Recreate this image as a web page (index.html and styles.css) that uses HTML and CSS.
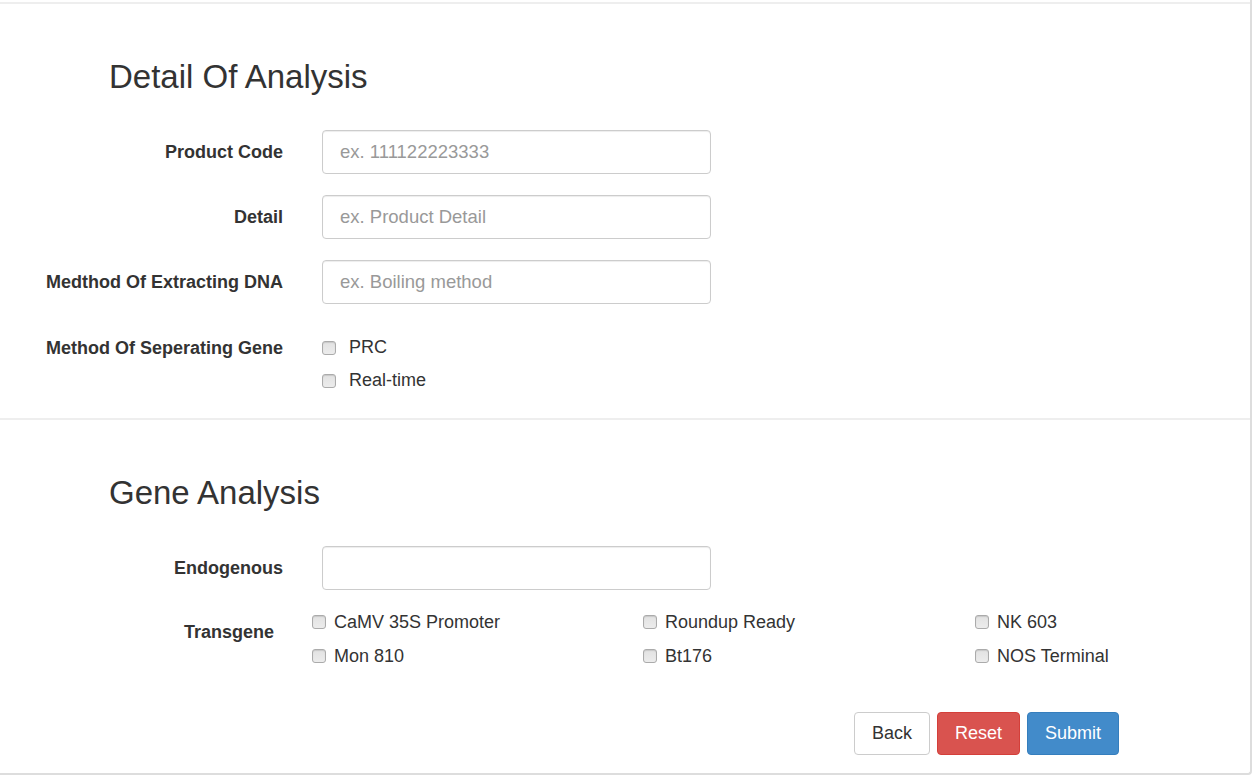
FILE: index.html
```html
<!DOCTYPE html>
<html>
<head>
<meta charset="utf-8">
<link rel="stylesheet" href="styles.css">
</head>
<body>
<div class="panel">
  <section class="section">
    <h2 class="section-title">Detail Of Analysis</h2>
    <div class="form-row">
      <label class="form-label">Product Code</label>
      <div class="form-field"><input class="form-input" type="text" placeholder="ex. 111122223333"></div>
    </div>
    <div class="form-row">
      <label class="form-label">Detail</label>
      <div class="form-field"><input class="form-input" type="text" placeholder="ex. Product Detail"></div>
    </div>
    <div class="form-row">
      <label class="form-label">Medthod Of Extracting DNA</label>
      <div class="form-field"><input class="form-input" type="text" placeholder="ex. Boiling method"></div>
    </div>
    <div class="form-row form-row-checks">
      <label class="form-label form-label-line">Method Of Seperating Gene</label>
      <div class="form-field check-list">
        <label class="check"><input class="check-box" type="checkbox"><span>PRC</span></label>
        <label class="check"><input class="check-box" type="checkbox"><span>Real-time</span></label>
      </div>
    </div>
  </section>
  <section class="section">
    <h2 class="section-title">Gene Analysis</h2>
    <div class="form-row form-row-tight">
      <label class="form-label">Endogenous</label>
      <div class="form-field"><input class="form-input" type="text"></div>
    </div>
    <div class="form-row form-row-transgene">
      <label class="form-label form-label-transgene">Transgene</label>
      <div class="check-grid">
        <label class="check check-tight"><input class="check-box" type="checkbox"><span>CaMV 35S Promoter</span></label>
        <label class="check check-tight"><input class="check-box" type="checkbox"><span>Roundup Ready</span></label>
        <label class="check check-tight"><input class="check-box" type="checkbox"><span>NK 603</span></label>
        <label class="check check-tight"><input class="check-box" type="checkbox"><span>Mon 810</span></label>
        <label class="check check-tight"><input class="check-box" type="checkbox"><span>Bt176</span></label>
        <label class="check check-tight"><input class="check-box" type="checkbox"><span>NOS Terminal</span></label>
      </div>
    </div>
    <div class="actions">
      <button class="btn btn-default" type="button">Back</button>
      <button class="btn btn-danger" type="reset">Reset</button>
      <button class="btn btn-primary" type="submit">Submit</button>
    </div>
  </section>
</div>
</body>
</html>
```
FILE: styles.css
```css
* { box-sizing: border-box; }
html, body {
  margin: 0;
  padding: 0;
  background: #ffffff;
}
body {
  font-family: "Liberation Sans", Arial, sans-serif;
  font-size: 18px;
  color: #333333;
  width: 1254px;
  height: 776px;
  overflow: hidden;
}
.panel {
  width: 1252px;
  padding-top: 2px;
  border-right: 2px solid #dddddd;
  border-bottom: 2px solid #dddddd;
  border-bottom-right-radius: 4px;
}
.section {
  border-top: 2px solid #eeeeee;
  padding-top: 55px;
  padding-bottom: 21px;
}
.section:last-child { padding-bottom: 18px; }
.section-title {
  margin: 0 0 36px 109px;
  font-size: 33px;
  font-weight: normal;
  line-height: 35px;
  color: #333333;
}
.form-row {
  display: flex;
  align-items: center;
  margin-bottom: 21px;
}
.form-row-tight { margin-bottom: 15px; }
.form-row-checks {
  align-items: flex-start;
  margin-top: 27px;
  margin-bottom: 0;
}
.form-row-transgene {
  align-items: flex-start;
  margin-bottom: 0;
}
.form-label {
  width: 283px;
  flex: none;
  text-align: right;
  font-weight: bold;
  font-size: 18px;
  color: #333333;
}
.form-label-line { line-height: 33px; padding-top: 1px; }
.form-label-transgene {
  padding-top: 10px;
  padding-right: 9px;
  line-height: 34px;
}
.form-field {
  margin-left: 39px;
  width: 389px;
}
.form-input {
  display: block;
  width: 100%;
  height: 44px;
  padding: 0 17px;
  font-family: "Liberation Sans", Arial, sans-serif;
  font-size: 18.5px;
  color: #555555;
  background: #ffffff;
  border: 1px solid #cccccc;
  border-radius: 4px;
  box-shadow: inset 0 1px 1px rgba(0,0,0,0.075);
  outline: none;
}
.form-input::placeholder { color: #999999; }
.check-list { display: flex; flex-direction: column; }
.check {
  display: flex;
  align-items: center;
  gap: 13px;
  height: 33px;
  font-size: 18px;
  color: #333333;
}
.check-tight { gap: 8px; height: 34px; }
.check-box {
  appearance: none;
  -webkit-appearance: none;
  margin: 0;
  width: 14px;
  height: 14px;
  flex: none;
  border: 1px solid #ababab;
  border-radius: 3px;
  background: linear-gradient(#e2e2e2, #ececec);
  box-shadow: inset 0 1px 1px rgba(0,0,0,0.12);
}
.check-grid {
  margin-left: 29px;
  display: grid;
  grid-template-columns: 331px 332px 260px;
}
.actions {
  display: flex;
  justify-content: flex-end;
  gap: 7px;
  margin-top: 39px;
  padding-right: 131px;
}
.btn {
  height: 43px;
  padding: 0 17px;
  font-family: "Liberation Sans", Arial, sans-serif;
  font-size: 18px;
  border: 1px solid transparent;
  border-radius: 4px;
  cursor: pointer;
}
.btn-default { background: #ffffff; border-color: #cccccc; color: #333333; }
.btn-danger { background: #d9534f; border-color: #d43f3a; color: #ffffff; }
.btn-primary { background: #428bca; border-color: #357ebd; color: #ffffff; }
```
